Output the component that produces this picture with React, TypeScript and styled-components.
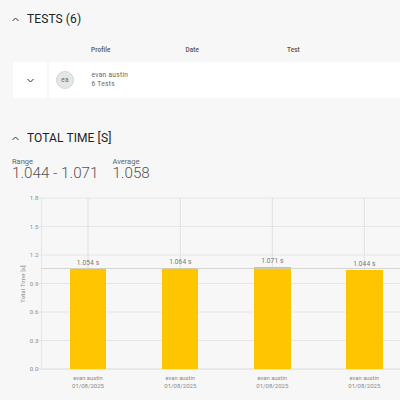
import React from "react";
import styled, { createGlobalStyle } from "styled-components";

const Global = createGlobalStyle`
  html, body { margin: 0; padding: 0; width: 400px; height: 400px; overflow: hidden; background: #f7f7f7; }
  body { font-family: Roboto, "Liberation Sans", sans-serif; color: #333; }
`;
const Page = styled.div`
  width: 400px; height: 400px; overflow: hidden; display: flex; flex-direction: column;
`;
const SectionHead = styled.div<{ $top: number }>`
  display: flex; align-items: center; gap: 8px; height: 16px;
  margin: ${p => p.$top}px 0 0 12px;
`;
const Title = styled.h2`
  margin: 0; font-size: 12px; font-weight: 400; line-height: 16px; letter-spacing: 0.1px; color: #222; text-transform: uppercase;
`;
const Chevron = styled.svg`
  width: 7px; height: 5px; flex: none; display: block; fill: none; stroke: #333; stroke-width: 1;
`;
const TableHead = styled.div`
  display: grid; grid-template-columns: 94.5px 101.5px auto; margin-top: 15.5px; padding-left: 91px; height: 14px;
  font-size: 6.4px; line-height: 14px; font-weight: 500; color: #555; letter-spacing: 0.1px;
`;
const Row = styled.div`
  display: flex; gap: 2px; margin: 5.5px 0 0 13px; height: 36px;
`;
const ToggleCell = styled.div`
  width: 34px; background: #fff; display: flex; align-items: center; justify-content: center;
`;
const MainCell = styled.div`
  flex: 1; background: #fff; display: flex; align-items: center; padding-left: 7px; gap: 17.5px;
`;
const Avatar = styled.div`
  box-sizing: border-box; width: 18px; height: 18px; border-radius: 50%; background: #e6e6e6; border: 1px solid #d6d6d6;
  display: flex; align-items: center; justify-content: center; font-size: 6.4px; color: #666; letter-spacing: 0.3px;
`;
const Person = styled.div`
  display: flex; flex-direction: column; gap: 2px; font-size: 6.6px; line-height: 7px; color: #666; letter-spacing: 0.3px;
`;
const Stats = styled.div`
  display: flex; gap: 14px; margin: 12px 0 0 12px;
`;
const Stat = styled.div`
  display: flex; flex-direction: column;
`;
const StatLabel = styled.span`
  font-size: 7.5px; line-height: 8px; color: #666;
`;
const StatValue = styled.span`
  font-size: 15.2px; font-weight: 300; line-height: 15px; color: #555;
`;
const Chart = styled.svg`
  display: block; width: 400px; height: 214px; margin-top: 5px; flex: none;
`;

const gridY = [198, 226.5, 255, 283.5, 312, 340.5, 369];
const yLabels = ["1.8", "1.5", "1.2", "0.9", "0.6", "0.3", "0.0"];
const bars = [
  { x: 70, w: 36, cx: 88, top: 268.5, label: "1.054 s", ly: 264 },
  { x: 162, w: 36, cx: 180.3, top: 268, label: "1.064 s", ly: 263 },
  { x: 254, w: 37, cx: 272.3, top: 267, label: "1.071 s", ly: 262.5 },
  { x: 346, w: 37, cx: 364.3, top: 270, label: "1.044 s", ly: 265 },
];
const off = 186;

export default function App() {
  return (
    <Page>
      <Global />
      <SectionHead $top={11}>
        <Chevron viewBox="0 0 7 5"><path d="M0.5 4 L3.5 1 L6.5 4" /></Chevron>
        <Title>Tests (6)</Title>
      </SectionHead>
      <TableHead>
        <span>Profile</span>
        <span>Date</span>
        <span>Test</span>
      </TableHead>
      <Row>
        <ToggleCell>
          <Chevron viewBox="0 0 7 5"><path d="M0.5 1 L3.5 4 L6.5 1" /></Chevron>
        </ToggleCell>
        <MainCell>
          <Avatar>ea</Avatar>
          <Person>
            <span>evan austin</span>
            <span>6 Tests</span>
          </Person>
        </MainCell>
      </Row>
      <SectionHead $top={32}>
        <Chevron viewBox="0 0 7 5"><path d="M0.5 4 L3.5 1 L6.5 4" /></Chevron>
        <Title>Total Time [s]</Title>
      </SectionHead>
      <Stats>
        <Stat>
          <StatLabel>Range</StatLabel>
          <StatValue>1.044 - 1.071</StatValue>
        </Stat>
        <Stat>
          <StatLabel>Average</StatLabel>
          <StatValue>1.058</StatValue>
        </Stat>
      </Stats>
      <Chart viewBox={`0 ${off} 400 214`} fontFamily="Roboto, sans-serif">
        {gridY.map((y, i) => (
          <g key={y}>
            <line x1={38} x2={400} y1={y} y2={y} stroke={i === 6 ? "#dadada" : "#e6e6e6"} strokeWidth={1} />
            <text x={38.5} y={y + 2} fontSize={6} fill="#8a8a8a" textAnchor="end" letterSpacing={0.1}>{yLabels[i]}</text>
          </g>
        ))}
        <line x1={41.5} x2={41.5} y1={198} y2={369} stroke="#e6e6e6" />
        {bars.map(b => (
          <line key={b.cx} x1={b.cx} x2={b.cx} y1={198} y2={369} stroke="#e0e0e0" />
        ))}
        <text transform="translate(25 284) rotate(-90)" fontSize={6} fill="#8a8a8a" textAnchor="middle" letterSpacing={0.1}>Total Time [s]</text>
        {bars.map(b => (
          <g key={b.x}>
            <rect x={b.x} y={b.top} width={b.w} height={369 - b.top} fill="#ffc600" />
            <text x={b.cx} y={b.ly + 0.5} fontSize={6.6} fill="#777" textAnchor="middle" letterSpacing={0.1}>{b.label}</text>
            <text x={b.cx} y={380} fontSize={5.8} fill="#8a8a8a" textAnchor="middle">evan austin</text>
            <text x={b.cx} y={387.5} fontSize={6} fill="#8a8a8a" textAnchor="middle">01/08/2025</text>
          </g>
        ))}
        <line x1={41.5} x2={400} y1={268.5} y2={268.5} stroke="#cccccc" strokeWidth={0.8} />
      </Chart>
    </Page>
  );
}
